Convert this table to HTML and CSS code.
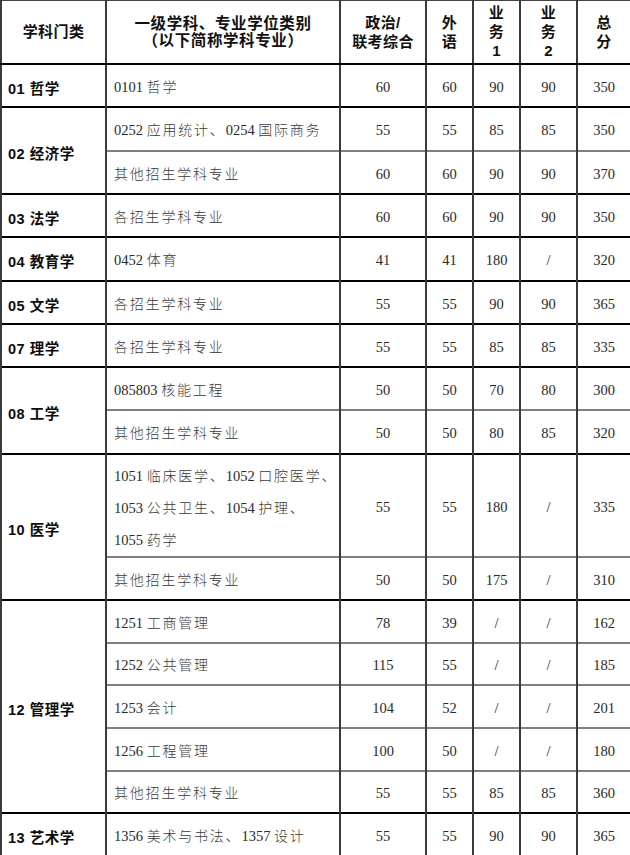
FILE: index.html
```html
<!DOCTYPE html>
<html lang="zh-CN">
<head>
<meta charset="utf-8">
<title>复试基本分数线</title>
<link rel="stylesheet" href="styles.css">
</head>
<body>
<table class="score">
  <colgroup>
    <col class="c-cat"><col class="c-major"><col class="c-pol"><col class="c-lang"><col class="c-b1"><col class="c-b2"><col class="c-sum">
  </colgroup>
  <thead>
    <tr class="head">
      <th>学科门类</th>
      <th class="tight">一级学科、专业学位类别<br>（以下简称学科专业）</th>
      <th>政治/<br>联考综合</th>
      <th>外<br>语</th>
      <th>业<br>务<br>1</th>
      <th>业<br>务<br>2</th>
      <th>总<br>分</th>
    </tr>
  </thead>
  <tbody>
    <tr class="grp r43">
      <td class="cat">01 哲学</td><td class="major">0101 <span class="cn">哲学</span></td>
      <td>60</td><td>60</td><td>90</td><td>90</td><td>350</td>
    </tr>
    <tr class="grp r44">
      <td class="cat" rowspan="2">02 经济学</td><td class="major">0252 <span class="cn">应用统计、</span>0254 <span class="cn">国际商务</span></td>
      <td>55</td><td>55</td><td>85</td><td>85</td><td>350</td>
    </tr>
    <tr class="sub r43">
      <td class="major"><span class="cn">其他招生学科专业</span></td>
      <td>60</td><td>60</td><td>90</td><td>90</td><td>370</td>
    </tr>
    <tr class="grp r43">
      <td class="cat">03 法学</td><td class="major"><span class="cn">各招生学科专业</span></td>
      <td>60</td><td>60</td><td>90</td><td>90</td><td>350</td>
    </tr>
    <tr class="grp r44">
      <td class="cat">04 教育学</td><td class="major">0452 <span class="cn">体育</span></td>
      <td>41</td><td>41</td><td>180</td><td>/</td><td>320</td>
    </tr>
    <tr class="grp r43">
      <td class="cat">05 文学</td><td class="major"><span class="cn">各招生学科专业</span></td>
      <td>55</td><td>55</td><td>90</td><td>90</td><td>365</td>
    </tr>
    <tr class="grp r43">
      <td class="cat">07 理学</td><td class="major"><span class="cn">各招生学科专业</span></td>
      <td>55</td><td>55</td><td>85</td><td>85</td><td>335</td>
    </tr>
    <tr class="grp r43">
      <td class="cat" rowspan="2">08 工学</td><td class="major">085803 <span class="cn">核能工程</span></td>
      <td>50</td><td>50</td><td>70</td><td>80</td><td>300</td>
    </tr>
    <tr class="sub r44">
      <td class="major"><span class="cn">其他招生学科专业</span></td>
      <td>50</td><td>50</td><td>80</td><td>85</td><td>320</td>
    </tr>
    <tr class="grp r101">
      <td class="cat" rowspan="2">10 医学</td>
      <td class="major multi">1051 <span class="cn">临床医学、</span>1052 <span class="cn">口腔医学、</span><br>1053 <span class="cn">公共卫生、</span>1054 <span class="cn">护理、</span><br>1055 <span class="cn">药学</span></td>
      <td>55</td><td>55</td><td>180</td><td>/</td><td>335</td>
    </tr>
    <tr class="sub r43">
      <td class="major"><span class="cn">其他招生学科专业</span></td>
      <td>50</td><td>50</td><td>175</td><td>/</td><td>310</td>
    </tr>
    <tr class="grp r43">
      <td class="cat" rowspan="5">12 管理学</td><td class="major">1251 <span class="cn">工商管理</span></td>
      <td>78</td><td>39</td><td>/</td><td>/</td><td>162</td>
    </tr>
    <tr class="sub r42">
      <td class="major">1252 <span class="cn">公共管理</span></td>
      <td>115</td><td>55</td><td>/</td><td>/</td><td>185</td>
    </tr>
    <tr class="sub r43">
      <td class="major">1253 <span class="cn">会计</span></td>
      <td>104</td><td>52</td><td>/</td><td>/</td><td>201</td>
    </tr>
    <tr class="sub r43">
      <td class="major">1256 <span class="cn">工程管理</span></td>
      <td>100</td><td>50</td><td>/</td><td>/</td><td>180</td>
    </tr>
    <tr class="sub r42">
      <td class="major"><span class="cn">其他招生学科专业</span></td>
      <td>55</td><td>55</td><td>85</td><td>85</td><td>360</td>
    </tr>
    <tr class="grp r43">
      <td class="cat">13 艺术学</td><td class="major">1356 <span class="cn">美术与书法、</span>1357 <span class="cn">设计</span></td>
      <td>55</td><td>55</td><td>90</td><td>90</td><td>365</td>
    </tr>
  </tbody>
</table>
</body>
</html>
```

FILE: styles.css
```css
html, body {
  margin: 0;
  padding: 0;
  background: #ffffff;
}

.score {
  width: 630px;
  table-layout: fixed;
  border-collapse: collapse;
  border-left: 1px solid #555;
  border-top: 1px solid #444;
  border-right: 2px solid #333;
}

.c-cat { width: 105px; }
.c-major { width: 234px; }
.c-pol { width: 86px; }
.c-lang { width: 47px; }
.c-b1 { width: 47px; }
.c-b2 { width: 57px; }
.c-sum { width: 54px; }

.score th,
.score td {
  border-left: 2px solid #3a3a3a;
  border-right: 2px solid #3a3a3a;
  padding: 0;
}

.head {
  height: 63px;
}

.head th {
  font-family: "Liberation Sans", "Noto Sans CJK SC", sans-serif;
  font-weight: 700;
  font-size: 15px;
  letter-spacing: 0.4px;
  line-height: 19px;
  color: #111;
  text-align: center;
  vertical-align: middle;
  border-bottom: 2px solid #000;
}

.head th.tight {
  line-height: 17px;
  font-size: 15.5px;
  letter-spacing: 0.6px;
}

.score td {
  font-family: "Liberation Serif", "Noto Sans CJK SC", serif;
  font-size: 14.5px;
  color: #2a2a2a;
  text-align: center;
  vertical-align: middle;
  padding-top: 4px;
}

.grp td {
  border-top: 2px solid #000;
}

.sub td {
  border-top: 2px solid #808080;
}

.score td.cat {
  font-family: "Liberation Sans", "Noto Sans CJK SC", sans-serif;
  font-weight: 700;
  font-size: 14.5px;
  letter-spacing: 0.5px;
  color: #0d0d0d;
  text-align: left;
  padding-left: 6px;
}

.score td.major {
  text-align: left;
  padding-left: 7px;
  white-space: nowrap;
}

.cn {
  font-family: "Noto Sans CJK SC", sans-serif;
  font-size: 14px;
  font-weight: 300;
  line-height: 1;
  letter-spacing: 1.8px;
  color: #3a3a3a;
}

.score td.multi {
  line-height: 32px;
  padding-top: 5px;
  vertical-align: top;
}

.r42 { height: 42px; }
.r43 { height: 43px; }
.r44 { height: 44px; }
.r101 { height: 101px; }
```
